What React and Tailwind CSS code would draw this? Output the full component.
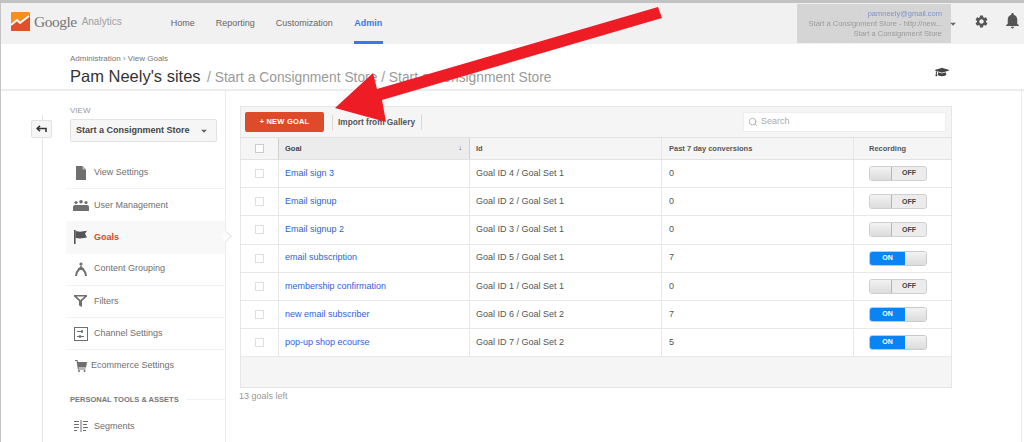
import { Search } from 'lucide-react';
import { MdSettings, MdNotifications, MdArrowDropDown } from 'react-icons/md';
import { FaGraduationCap } from 'react-icons/fa';

const goals = [
  { name: 'Email sign 3', id: 'Goal ID 4 / Goal Set 1', conv: 0, on: false },
  { name: 'Email signup', id: 'Goal ID 2 / Goal Set 1', conv: 0, on: false },
  { name: 'Email signup 2', id: 'Goal ID 3 / Goal Set 1', conv: 0, on: false },
  { name: 'email subscription', id: 'Goal ID 5 / Goal Set 1', conv: 7, on: true },
  { name: 'membership confirmation', id: 'Goal ID 1 / Goal Set 1', conv: 0, on: false },
  { name: 'new email subscriber', id: 'Goal ID 6 / Goal Set 2', conv: 7, on: true },
  { name: 'pop-up shop ecourse', id: 'Goal ID 7 / Goal Set 2', conv: 5, on: true },
];

const rowGrid = 'grid grid-cols-[37px_192px_191px_192px_1fr]';

function Logo() {
  return (
    <svg width="19" height="19" viewBox="0 0 19 19" className="shrink-0">
      <rect width="19" height="19" rx="1" fill="#f78f1e" />
      <path d="M0 12 L6 7 L9 10 L19 3 V19 H0 Z" fill="#e2502a" />
      <path d="M0 13 L6 8 L9 11 L18 4" fill="none" stroke="#fff" strokeWidth="2" />
    </svg>
  );
}

const iconFill = '#6f6f6f';

function FileIcon() {
  return (
    <svg width="12" height="14" viewBox="0 0 12 14">
      <path d="M1 0H7.5L11 3.5V14H1Z" fill={iconFill} />
      <path d="M7.5 0V3.5H11" fill="#bbb" />
    </svg>
  );
}

function UsersIcon() {
  return (
    <svg width="16" height="11" viewBox="0 0 16 11" fill={iconFill}>
      <circle cx="3" cy="2.5" r="1.6" />
      <circle cx="8" cy="1.8" r="1.8" />
      <circle cx="13" cy="2.5" r="1.6" />
      <path d="M0 11V7Q0 5 2 5H14Q16 5 16 7V11Z" />
    </svg>
  );
}

function FlagIcon() {
  return (
    <svg width="13" height="14" viewBox="0 0 13 14" fill="#555">
      <rect x="0" y="0" width="1.6" height="14" />
      <path d="M1.6 1L6 1.8L13 .8L11 3.8L13 7.5L6 8.5L1.6 8Z" />
    </svg>
  );
}

function GroupingIcon() {
  return (
    <svg width="12" height="14" viewBox="0 0 12 14" fill="none" stroke={iconFill} strokeWidth="2">
      <circle cx="6" cy="2" r="1.6" fill={iconFill} stroke="none" />
      <path d="M1 14C1 9 4 8 6 5C8 8 11 9 11 14" />
      <path d="M3 7L9 7" />
    </svg>
  );
}

function FilterIcon() {
  return (
    <svg width="13" height="12" viewBox="0 0 13 12" fill={iconFill}>
      <path d="M0 0H13V1.5L8 6V12L5 10.5V6L0 1.5ZM2.5 1.6L6.5 5L10.5 1.6Z" fillRule="evenodd" />
    </svg>
  );
}

function ChannelIcon() {
  return (
    <svg width="14" height="14" viewBox="0 0 14 14" fill="none" stroke={iconFill}>
      <rect x=".5" y=".5" width="13" height="13" />
      <path d="M3 4.5H9M3 9.5H10" />
      <path d="M8 3V6M6 8V11" strokeWidth="1.5" />
    </svg>
  );
}

function CartIcon() {
  return (
    <svg width="12" height="12" viewBox="0 0 12 12" fill={iconFill}>
      <path d="M0 0H2.4L3 2H12L11 7.5H3.6L3.8 8.5H10.5V9.5H2.8L1.6 1H0Z" />
      <circle cx="4" cy="11" r="1" />
      <circle cx="9.5" cy="11" r="1" />
    </svg>
  );
}

function SegmentsIcon() {
  return (
    <svg width="14" height="12" viewBox="0 0 14 12" fill="none" stroke={iconFill}>
      <path d="M7 0V12" />
      <path d="M0 1.5H5M0 4.5H5M0 7.5H5M0 10.5H3M9 1.5H14M9 4.5H13M9 7.5H14M9 10.5H12" />
    </svg>
  );
}

function NavRow({ icon, label, active, rule = true, offset }) {
  return (
    <div
      className={`relative flex h-[32.2px] items-center ${rule ? 'border-b border-[#f3f3f3]' : ''} ${active ? 'bg-[#f8f8f8]' : ''}`}
    >
      <span className="flex w-[28px] shrink-0 items-center justify-center pl-[1px]">{icon}</span>
      <span className={`text-[9px] ${offset ? '-ml-[3px]' : ''} ${active ? 'font-bold text-[#e0452a]' : 'text-[#707070]'}`}>
        {label}
      </span>
      {active && (
        <span className="absolute right-[-5px] top-[11px] h-[9px] w-[9px] rotate-45 border-r border-t border-[#e6e6e6] bg-[#fbfbfb]" />
      )}
    </div>
  );
}

function Toggle({ on }) {
  if (on) {
    return (
      <div className="flex h-[15px] w-[58px] overflow-hidden rounded-[3px] border border-[#c9c9c9]">
        <span className="flex w-[35px] items-center justify-center bg-[#0a84f2] text-[7px] font-bold text-white">ON</span>
        <span className="flex-1 bg-gradient-to-b from-[#f3f3f3] to-[#dcdcdc]" />
      </div>
    );
  }
  return (
    <div className="flex h-[15px] w-[58px] overflow-hidden rounded-[3px] border border-[#cfcfcf] bg-[#ececec]">
      <span className="w-[22px] border-r border-[#b5b5b5] bg-gradient-to-b from-[#f3f3f3] to-[#dcdcdc]" />
      <span className="flex flex-1 items-center justify-center text-[7px] font-bold text-[#444]">OFF</span>
    </div>
  );
}

export default function App() {
  return (
    <div className="relative flex h-[442px] w-[1024px] flex-col overflow-hidden border-l border-[#c4c4c4] border-t-[3px] border-t-[#c2c2c2] bg-white font-['Liberation_Sans',Arial,sans-serif]">
      {/* top bar */}
      <header className="flex h-[41px] shrink-0 items-center bg-[#f1f1f1]">
        <div className="-mt-[4px] ml-[10px] flex items-center">
          <Logo />
          <span className="ml-[4px] font-['Liberation_Serif',serif] text-[15.5px] tracking-[-0.5px] text-[#777]">Google</span>
          <span className="ml-[5px] text-[10px] text-[#a0a0a0]">Analytics</span>
        </div>
        <nav className="ml-[49px] flex h-full text-[9px] text-[#666]">
          <a className="flex items-center">Home</a>
          <a className="ml-[21px] flex items-center">Reporting</a>
          <a className="ml-[21px] flex items-center">Customization</a>
          <a className="ml-[21px] flex items-center border-b-[3px] border-t-[3px] border-t-transparent border-b-[#3b78e7] px-[0.5px] font-bold text-[#3b78e7]">Admin</a>
        </nav>
        <div className="relative ml-auto mr-[73px] flex h-[39px] w-[154px] flex-col items-end justify-center overflow-hidden bg-[#d0d0d0] pr-[9px] text-[7.5px] leading-[10px] text-[#9a9a9a]">
          <svg className="absolute inset-0" width="154" height="39">
            <filter id="grain">
              <feTurbulence type="fractalNoise" baseFrequency="0.9" numOctaves="2" />
              <feColorMatrix values="0 0 0 0 1  0 0 0 0 1  0 0 0 0 1  0.6 0 0 0 0" />
            </filter>
            <rect width="154" height="39" filter="url(#grain)" opacity="0.35" />
          </svg>
          <span className="relative text-[#7f93c9] blur-[0.4px]">pamneely@gmail.com</span>
          <span className="relative blur-[0.4px]">Start a Consignment Store - http://new...</span>
          <span className="relative blur-[0.4px]">Start a Consignment Store</span>
        </div>
        <MdArrowDropDown className="absolute left-[945px] top-[14px] text-[14px] text-[#666]" />
        <MdSettings className="absolute left-[973px] top-[11px] text-[15px] text-[#555]" />
        <MdNotifications className="absolute left-[1002px] top-[8px] text-[19px] text-[#555]" />
      </header>

      {/* page title */}
      <div className="relative h-[47px] shrink-0 border-b-2 border-[#ececec] pl-[69px] pt-[9px]">
        <div className="text-[8px] leading-[12px] text-[#777]">Administration › View Goals</div>
        <div className="mt-[1px] flex items-baseline whitespace-nowrap leading-[20px]">
          <span className="text-[16.5px] text-[#333]">Pam Neely&apos;s sites</span>
          <span className="ml-[6.5px] text-[13.8px] text-[#9a9a9a]">/ Start a Consignment Store / Start a Consignment Store</span>
        </div>
        <FaGraduationCap className="absolute left-[934px] top-[21px] text-[14px] text-[#444]" />
      </div>

      <div className="flex min-h-0 flex-1">
        {/* sidebar */}
        <aside className="relative w-[225px] shrink-0 border-r border-[#ececec]">
          <div className="absolute bottom-0 left-[41px] top-[24px] w-[1px] bg-[#e4e4e4]" />
          <button className="absolute left-[30px] top-[29px] flex h-[18px] w-[21px] items-center justify-center rounded-[2px] border border-[#e2e2e2] bg-[#f6f6f6]">
            <svg width="11" height="8" viewBox="0 0 11 8" fill="none" stroke="#333" strokeWidth="1.6">
              <path d="M10 7V3.5H2" />
              <path d="M4 .8L1.2 3.5L4 6.2" />
            </svg>
          </button>
          <div className="ml-[65px]">
            <div className="ml-[4px] mt-[15px] text-[8px] leading-[10px] text-[#999]">VIEW</div>
            <div className="ml-[4px] mt-[3px] flex h-[23px] w-[147px] items-center justify-between rounded-[2px] border border-[#e2e2e2] bg-[#f6f6f6] pl-[5px] pr-[5px] text-[9px] font-bold text-[#444]">
              <span className="whitespace-nowrap">Start a Consignment Store</span>
              <MdArrowDropDown className="text-[14px] text-[#666]" />
            </div>
            <div className="mt-[15px]">
              <NavRow icon={<FileIcon />} label="View Settings" />
              <NavRow icon={<UsersIcon />} label="User Management" rule={false} />
              <NavRow icon={<FlagIcon />} label="Goals" active rule={false} />
              <NavRow icon={<GroupingIcon />} label="Content Grouping" />
              <NavRow icon={<FilterIcon />} label="Filters" />
              <NavRow icon={<ChannelIcon />} label="Channel Settings" />
              <NavRow icon={<CartIcon />} label="Ecommerce Settings" rule={false} offset />
            </div>
            <div className="mt-[12px] flex h-[10px] items-center pl-[4px]">
              <span className="whitespace-nowrap text-[7.5px] font-bold text-[#777]">PERSONAL TOOLS &amp; ASSETS</span>
              <span className="ml-[7px] h-[1px] flex-1 bg-[#f0f0f0]" />
            </div>
            <div className="mt-[6px]">
              <NavRow icon={<SegmentsIcon />} label="Segments" rule={false} />
            </div>
          </div>
        </aside>

        {/* goals table */}
        <main className="min-w-0 flex-1 pl-[14px] pt-[15px]">
          <div className="w-[712px] border border-[#e6e6e6] text-[9px]">
            <div className="flex h-[30px] items-center bg-[#f5f5f5] pl-[4px] pr-[5px]">
              <button className="h-[20px] w-[79px] rounded-[2px] bg-[#dd4b2b] text-[7.5px] font-bold tracking-[0.2px] text-white">+ NEW GOAL</button>
              <span className="ml-[8px] h-[15px] w-[1px] bg-[#d8d8d8]" />
              <span className="ml-[5px] text-[8.3px] font-bold text-[#555]">Import from Gallery</span>
              <span className="ml-[6px] h-[15px] w-[1px] bg-[#d8d8d8]" />
              <div className="ml-auto flex h-[20px] w-[203px] items-center gap-[3px] border border-[#eee] bg-white pl-[4px] text-[9px] text-[#aaa]">
                <Search size={10} strokeWidth={2} className="text-[#aaa]" />
                Search
              </div>
            </div>
            <div className={`${rowGrid} h-[23px] items-stretch border-y border-[#e2e2e2] bg-[#f5f5f5] text-[7.5px] font-bold text-[#555]`}>
              <div className="flex items-center justify-center">
                <span className="h-[9px] w-[9px] border border-[#ccc] bg-white" />
              </div>
              <div className="flex items-center justify-between border-x border-[#cfcfcf] bg-[#ececec] pl-[6px] pr-[7px] text-[#444]">
                Goal
                <span className="text-[7px]">↓</span>
              </div>
              <div className="flex items-center pl-[6px]">Id</div>
              <div className="flex items-center border-l border-[#e6e6e6] pl-[7px]">Past 7 day conversions</div>
              <div className="flex items-center border-l border-[#e6e6e6] pl-[15px]">Recording</div>
            </div>
            {goals.map((g) => (
              <div key={g.name} className={`${rowGrid} h-[28.2px] items-stretch border-b border-[#e8e8e8] text-[#555]`}>
                <div className="flex items-center justify-center">
                  <span className="h-[9px] w-[9px] border border-[#dedede] bg-white" />
                </div>
                <div className="flex items-center border-x border-[#e8e8e8] pl-[6px] text-[#2f62d8]">{g.name}</div>
                <div className="flex items-center pl-[6px]">{g.id}</div>
                <div className="flex items-center border-l border-[#e8e8e8] pl-[7px]">{g.conv}</div>
                <div className="flex items-center border-l border-[#e8e8e8] pl-[15px]">
                  <Toggle on={g.on} />
                </div>
              </div>
            ))}
            <div className="h-[30px] bg-[#f5f5f5]" />
          </div>
          <div className="mt-[1px] -ml-[1px] text-[9px] leading-[14px] text-[#999]">13 goals left</div>
        </main>
        <div className="mr-[2px] w-[1px] bg-[#ececec]" />
      </div>

      {/* red annotation arrow */}
      <svg className="pointer-events-none absolute left-[-1px] top-[-3px]" width="1024" height="442">
        <polygon points="335,108 373,73 377,89 658,7 662,18 382,100 386,122" fill="#ee1c25" />
      </svg>
    </div>
  );
}
